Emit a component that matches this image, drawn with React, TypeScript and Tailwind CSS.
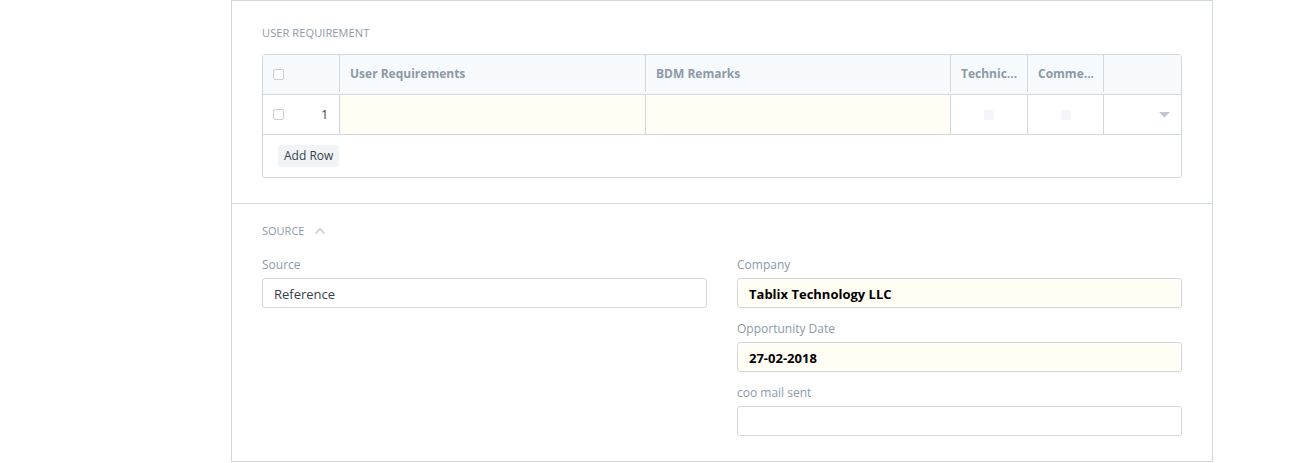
import React from 'react';

const font = { fontFamily: '"Open Sans", "Noto Sans", sans-serif' };

const Checkbox = () => (
  <span className="inline-block w-[11px] h-[11px] rounded-[2px] border border-[#c8cfd5] bg-white" />
);

const Field: React.FC<{ label: string; value?: string; bold?: boolean; filled?: boolean }> = ({
  label,
  value,
  bold,
  filled,
}) => (
  <div className="flex flex-col">
    <label className="text-[12px] leading-[16px] text-[#8d99a6] mb-[5px] mt-[1px]">{label}</label>
    <div
      className={`h-[30px] rounded-[3px] border border-[#d1d8dd] px-[11px] pt-[3px] flex items-center text-[13px] ${
        filled ? 'bg-[#fffdf4]' : 'bg-white'
      } ${bold ? 'font-bold text-black' : 'text-[#36414c]'}`}
    >
      {value}
    </div>
  </div>
);

export default function App() {
  return (
    <div className="w-[1296px] h-[463px] bg-white overflow-hidden" style={font}>
      <div className="ml-[231px] w-[982px] h-[462px] border border-[#d1d8dd]">
        {/* user requirement section */}
        <section className="px-[30px] pt-[25px] pb-[25px] border-b border-[#d1d8dd]">
          <h3 className="text-[11px] leading-[14px] text-[#8d99a6] uppercase tracking-[0.01em]">User Requirement</h3>
          <div className="mt-[14px] border border-[#d1d8dd] rounded-[3px] text-[12px]">
            <div className="flex h-[40px] pb-[2px] bg-[#f7fafc] border-b border-[#d1d8dd] font-bold text-[#8d99a6]">
              <div className="w-[77px] border-r border-[#d1d8dd] flex items-center pl-[10px] pt-[2px]">
                <Checkbox />
              </div>
              <div className="w-[306px] border-r border-[#d1d8dd] flex items-center px-[10px]">User Requirements</div>
              <div className="w-[305px] border-r border-[#d1d8dd] flex items-center px-[10px]">BDM Remarks</div>
              <div className="w-[77px] border-r border-[#d1d8dd] flex items-center px-[10px] truncate">Technic...</div>
              <div className="w-[76px] border-r border-[#d1d8dd] flex items-center px-[10px] truncate">Comme...</div>
              <div className="flex-1" />
            </div>
            <div className="flex h-[40px] border-b border-[#d1d8dd]">
              <div className="w-[77px] border-r border-[#d1d8dd] flex items-center justify-between pl-[10px] pr-[11px] text-[#36414c]">
                <Checkbox />
                <span className="text-[12px]">1</span>
              </div>
              <div className="w-[306px] border-r border-[#d1d8dd] bg-[#fffdf4]" />
              <div className="w-[305px] border-r border-[#d1d8dd] bg-[#fffdf4]" />
              <div className="w-[77px] border-r border-[#d1d8dd] flex items-center justify-center">
                <span className="w-[10px] h-[10px] rounded-[2px] bg-[#f3f5f8]" />
              </div>
              <div className="w-[76px] border-r border-[#d1d8dd] flex items-center justify-center">
                <span className="w-[10px] h-[10px] rounded-[2px] bg-[#f3f5f8]" />
              </div>
              <div className="flex-1 flex items-center justify-end pr-[11px]">
                <svg width="11" height="6" viewBox="0 0 11 6">
                  <path d="M0 0 L11 0 L5.5 5.5 Z" fill="#c0c6cc" />
                </svg>
              </div>
            </div>
            <div className="h-[42px] flex items-center pl-[15px]">
              <button className="h-[22px] px-[6px] rounded-[3px] bg-[#f0f4f7] text-[12px] text-[#36414c]">Add Row</button>
            </div>
          </div>
        </section>

        {/* source section */}
        <section className="px-[30px] pt-[19px]">
          <h3 className="flex items-center gap-[10px] text-[11px] leading-[16px] text-[#8d99a6] uppercase">
            Source
            <svg width="12" height="8" viewBox="0 0 12 8">
              <path d="M1.5 6.5 L6 2 L10.5 6.5" fill="none" stroke="#d1d8dd" strokeWidth="2" />
            </svg>
          </h3>
          <div className="mt-[17px] grid grid-cols-2 gap-x-[30px]">
            <div>
              <Field label="Source" value="Reference" />
            </div>
            <div className="flex flex-col gap-[12px]">
              <Field label="Company" value="Tablix Technology LLC" bold filled />
              <Field label="Opportunity Date" value="27-02-2018" bold filled />
              <Field label="coo mail sent" />
            </div>
          </div>
        </section>
      </div>
    </div>
  );
}
